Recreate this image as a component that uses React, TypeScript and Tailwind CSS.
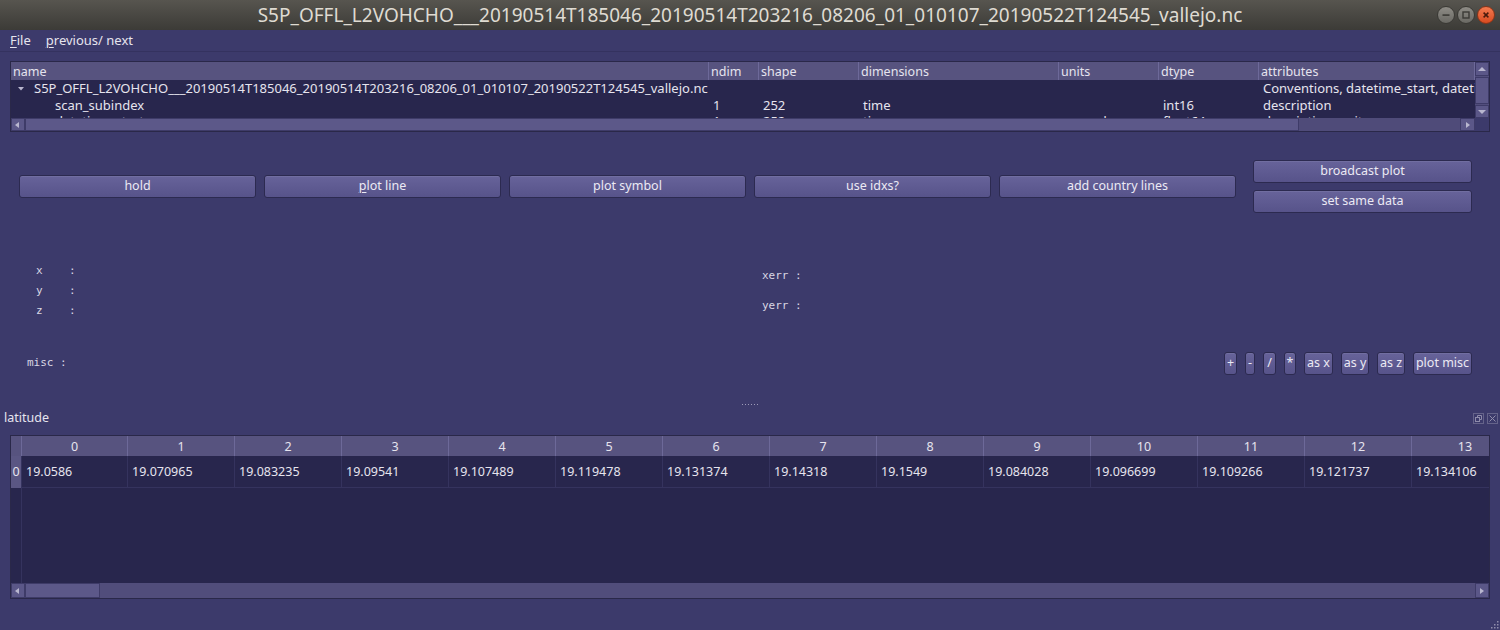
import React from "react";

const TITLE =
  "S5P_OFFL_L2VOHCHO___20190514T185046_20190514T203216_08206_01_010107_20190522T124545_vallejo.nc";

const Btn = ({ children, className = "" }: { children: React.ReactNode; className?: string }) => (
  <button
    className={`flex h-[23px] shrink-0 items-center justify-center rounded-[3px] border border-[#2c2a50] bg-linear-to-b from-[#67639a] to-[#57538a] text-[12.5px] text-[#eceaf4] shadow-[inset_0_1px_0_rgba(255,255,255,0.07)] ${className}`}
  >
    {children}
  </button>
);

const Arrow = ({ dir }: { dir: "left" | "right" | "up" | "down" }) => {
  const pts = {
    left: "6,2 2,5 6,8",
    right: "3,2 7,5 3,8",
    up: "1,7 5,3 9,7",
    down: "1,3 5,7 9,3",
  }[dir];
  return (
    <svg width="10" height="10" viewBox="0 0 10 10">
      <polygon points={pts} fill="#b9b7cf" />
    </svg>
  );
};

const treeCols = [
  { label: "name", w: "w-[698px]" },
  { label: "ndim", w: "w-[50px]" },
  { label: "shape", w: "w-[100px]" },
  { label: "dimensions", w: "w-[200px]" },
  { label: "units", w: "w-[100px]" },
  { label: "dtype", w: "w-[100px]" },
  { label: "attributes", w: "w-[216px]" },
];

const treeRows = [
  {
    h: "h-[17px]",
    cells: ["", "", "", "", "", "", "Conventions, datetime_start, datetime_stop"],
    root: true,
  },
  { h: "h-[16px]", cells: ["scan_subindex", "1", "252", "time", "", "int16", "description"] },
  { h: "h-[16px]", cells: ["datetime_start", "1", "252", "time", "seconds", "float64", "description, units"] },
];

const latitude = [
  "19.0586",
  "19.070965",
  "19.083235",
  "19.09541",
  "19.107489",
  "19.119478",
  "19.131374",
  "19.14318",
  "19.1549",
  "19.084028",
  "19.096699",
  "19.109266",
  "19.121737",
  "19.134106",
];

function WinButton({ kind }: { kind: "min" | "max" | "close" }) {
  const close = kind === "close";
  return (
    <div
      className={`flex h-[18px] w-[18px] items-center justify-center rounded-full border ${
        close
          ? "border-[#8a3418] bg-linear-to-b from-[#f37a4f] to-[#d94a1f]"
          : "border-[#3a3935] bg-linear-to-b from-[#8e8c86] to-[#6a6964]"
      }`}
    >
      <svg width="10" height="10" viewBox="0 0 10 10">
        {kind === "min" && <rect x="1.5" y="4.3" width="7" height="1.6" fill="#3b3a36" />}
        {kind === "max" && <rect x="2" y="2" width="6" height="6" fill="none" stroke="#3b3a36" strokeWidth="1.4" />}
        {close && <path d="M2.6 2.6 L7.4 7.4 M7.4 2.6 L2.6 7.4" stroke="#4a1a0c" strokeWidth="1.5" />}
      </svg>
    </div>
  );
}

export default function App() {
  return (
    <div className="flex h-[630px] w-[1500px] flex-col overflow-hidden bg-[#3c3a6b] font-['Noto_Sans',sans-serif] text-[12.5px] text-[#e6e4ee]">
      {/* title bar */}
      <div className="relative flex h-[30px] shrink-0 items-center justify-center bg-linear-to-b from-[#57554f] to-[#3c3b37] text-[19px] text-[#dfdbd2]">
        <span>{TITLE}</span>
        <div className="absolute right-[5px] top-[6px] flex gap-[2px]">
          <WinButton kind="min" />
          <WinButton kind="max" />
          <WinButton kind="close" />
        </div>
      </div>

      {/* menu bar */}
      <div className="flex h-[22px] shrink-0 items-center gap-[15px] border-b border-[#34325f] px-[10px] text-[13px] text-[#e6e4ee]">
        <span>
          <span className="underline underline-offset-2">F</span>ile
        </span>
        <span>
          <span className="underline underline-offset-2">p</span>revious/ next
        </span>
      </div>

      {/* variable tree */}
      <div className="mx-[10px] mt-[9px] flex h-[71px] shrink-0 flex-col border border-[#2a2849]">
        <div className="flex h-[56px]">
          <div className="flex w-[1464px] flex-col overflow-hidden">
            <div className="flex h-[18px] shrink-0 bg-[#57537f]">
              {treeCols.map((c) => (
                <div
                  key={c.label}
                  className={`${c.w} shrink-0 border-r border-[#6d6999] pl-[2px] leading-[19px] text-[#e6e4ee]`}
                >
                  {c.label}
                </div>
              ))}
            </div>
            <div className="flex-1 overflow-hidden bg-[#28264d] text-[13px]">
              {treeRows.map((r, i) => (
                <div key={i} className={`flex ${r.h} shrink-0`}>
                  {treeCols.map((c, j) => (
                    <div
                      key={j}
                      className={`${c.w} shrink-0 overflow-hidden whitespace-nowrap leading-[17px] ${
                        j === 0 ? "" : "pl-[4px]"
                      }`}
                    >
                      {j === 0 && r.root ? (
                        <span className="flex items-center">
                          <svg width="23" height="17" viewBox="0 0 23 17" className="shrink-0">
                            <polygon points="7,7 13,7 10,10.5" fill="#b9b7cf" />
                          </svg>
                          {TITLE}
                        </span>
                      ) : j === 0 ? (
                        <span className="pl-[44px]">{r.cells[0]}</span>
                      ) : (
                        r.cells[j]
                      )}
                    </div>
                  ))}
                </div>
              ))}
            </div>
          </div>
          {/* vertical scrollbar */}
          <div className="flex w-[14px] flex-col bg-[#524e7c]">
            <div className="flex h-[14px] items-center justify-center border border-[#3e3b68] bg-[#5b5788]">
              <Arrow dir="up" />
            </div>
            <div className="mt-[1px] h-[27px] border border-[#3e3b68] bg-[#5b5788]" />
            <div className="flex-1" />
            <div className="flex h-[13px] items-center justify-center border border-[#3e3b68] bg-[#5b5788]">
              <Arrow dir="down" />
            </div>
          </div>
        </div>
        {/* horizontal scrollbar */}
        <div className="flex h-[14px]">
          <div className="flex w-[1464px] bg-[#4f4b79]">
            <div className="flex w-[14px] items-center justify-center border border-[#3e3b68] bg-[#5b5788]">
              <Arrow dir="left" />
            </div>
            <div className="w-[1274px] border border-[#3e3b68] bg-[#5c5889]" />
            <div className="flex-1" />
            <div className="flex w-[15px] items-center justify-center border border-[#3e3b68] bg-[#5b5788]">
              <Arrow dir="right" />
            </div>
          </div>
          <div className="flex-1 bg-[#3c3a6b]" />
        </div>
      </div>

      {/* plot buttons */}
      <div className="mt-[28px] flex h-[52px] shrink-0 items-center pl-[19px]">
        <div className="flex gap-[8px]">
          <Btn className="w-[237px]">hold</Btn>
          <Btn className="w-[237px]">
            <span>
              <span className="underline underline-offset-2">p</span>lot line
            </span>
          </Btn>
          <Btn className="w-[237px]">plot symbol</Btn>
          <Btn className="w-[237px]">use idxs?</Btn>
          <Btn className="w-[237px]">add country lines</Btn>
        </div>
        <div className="ml-[17px] flex flex-col gap-[7px]">
          <Btn className="w-[219px]">broadcast plot</Btn>
          <Btn className="w-[219px]">set same data</Btn>
        </div>
      </div>

      {/* axis labels */}
      <div className="mt-[49px] flex h-[60px] shrink-0 font-['DejaVu_Sans_Mono',monospace] text-[11px] text-[#d9d7e3]">
        <div className="w-[762px] pl-[36px]">
          {["x    :", "y    :", "z    :"].map((t) => (
            <div key={t} className="h-[20px] whitespace-pre leading-[20px]">
              {t}
            </div>
          ))}
        </div>
        <div>
          {["xerr :", "yerr :"].map((t) => (
            <div key={t} className="h-[30px] whitespace-pre leading-[30px]">
              {t}
            </div>
          ))}
        </div>
      </div>

      {/* misc row */}
      <div className="mt-[31px] flex h-[23px] shrink-0 items-center justify-between pl-[27px] pr-[28px]">
        <span className="whitespace-pre font-['DejaVu_Sans_Mono',monospace] text-[11px] text-[#d9d7e3]">misc :</span>
        <div className="flex gap-[8px]">
          <Btn className="w-[13px]">+</Btn>
          <Btn className="w-[10px]">-</Btn>
          <Btn className="w-[13px]">/</Btn>
          <Btn className="w-[12px]">*</Btn>
          <Btn className="w-[29px]">as x</Btn>
          <Btn className="w-[28px]">as y</Btn>
          <Btn className="w-[28px]">as z</Btn>
          <Btn className="w-[59px]">plot misc</Btn>
        </div>
      </div>

      {/* splitter handle */}
      <div className="mt-[24px] flex h-[10px] shrink-0 items-center justify-center gap-[2px]">
        {Array.from({ length: 6 }).map((_, i) => (
          <div key={i} className="h-[1px] w-[1px] bg-[#9d9bb8]" />
        ))}
      </div>

      {/* dock title */}
      <div className="flex h-[19px] shrink-0 items-center justify-between pl-[4px] pr-[2px]">
        <span className="text-[12.5px]">latitude</span>
        <div className="flex gap-[3px]">
          <svg width="11" height="11" viewBox="0 0 11 11">
            <rect x="0.5" y="0.5" width="10" height="10" fill="none" stroke="#8f8cab" strokeDasharray="1 1" />
            <rect x="2.5" y="4.5" width="4" height="4" fill="none" stroke="#8f8cab" />
            <path d="M4.5 4.5 V2.5 H8.5 V6.5 H6.5" fill="none" stroke="#8f8cab" />
          </svg>
          <svg width="11" height="11" viewBox="0 0 11 11">
            <rect x="0.5" y="0.5" width="10" height="10" fill="none" stroke="#8f8cab" strokeDasharray="1 1" />
            <path d="M2.5 2.5 L8.5 8.5 M8.5 2.5 L2.5 8.5" stroke="#8f8cab" />
          </svg>
        </div>
      </div>

      {/* data table */}
      <div className="mx-[10px] mt-[7px] flex h-[164px] shrink-0 flex-col border border-[#2a2849]">
        <div className="flex h-[20px] shrink-0 overflow-hidden bg-[#57537f]">
          <div className="w-[11px] shrink-0 border-r border-[#6d6999]" />
          {latitude.map((_, i) => (
            <div
              key={i}
              className={`${i === 0 ? "w-[106px]" : "w-[107px]"} shrink-0 border-r border-[#6d6999] text-center leading-[21px]`}
            >
              {i}
            </div>
          ))}
        </div>
        <div className="flex flex-1 flex-col overflow-hidden bg-[#28264d]">
          <div className="flex h-[32px] shrink-0">
            <div className="flex w-[11px] shrink-0 items-center justify-center border-r border-[#35335e] bg-[#5a5683] text-[12.5px]">
              0
            </div>
            {latitude.map((v, i) => (
              <div
                key={i}
                className={`${i === 0 ? "w-[106px]" : "w-[107px]"} shrink-0 border-r border-b border-[#35335e] pl-[4px] leading-[31px]`}
              >
                {v}
              </div>
            ))}
          </div>
          <div className="flex flex-1">
            <div className="w-[11px] border-r border-[#35335e]" />
          </div>
        </div>
        <div className="flex h-[15px] shrink-0 bg-[#514d7b]">
          <div className="flex w-[14px] items-center justify-center border border-[#3e3b68] bg-[#5b5788]">
            <Arrow dir="left" />
          </div>
          <div className="w-[75px] border border-[#3e3b68] bg-[#5c5889]" />
          <div className="flex-1" />
          <div className="flex w-[14px] items-center justify-center border border-[#3e3b68] bg-[#5b5788]">
            <Arrow dir="right" />
          </div>
        </div>
      </div>

      {/* size grip */}
      <div className="flex flex-1 items-end justify-end p-[1px]">
        <svg width="10" height="10" viewBox="0 0 10 10">
          {[
            [8, 2], [8, 5], [8, 8], [5, 5], [5, 8], [2, 8],
          ].map(([x, y], i) => (
            <rect key={i} x={x} y={y} width="1.5" height="1.5" fill="#8f8cab" />
          ))}
        </svg>
      </div>
    </div>
  );
}
